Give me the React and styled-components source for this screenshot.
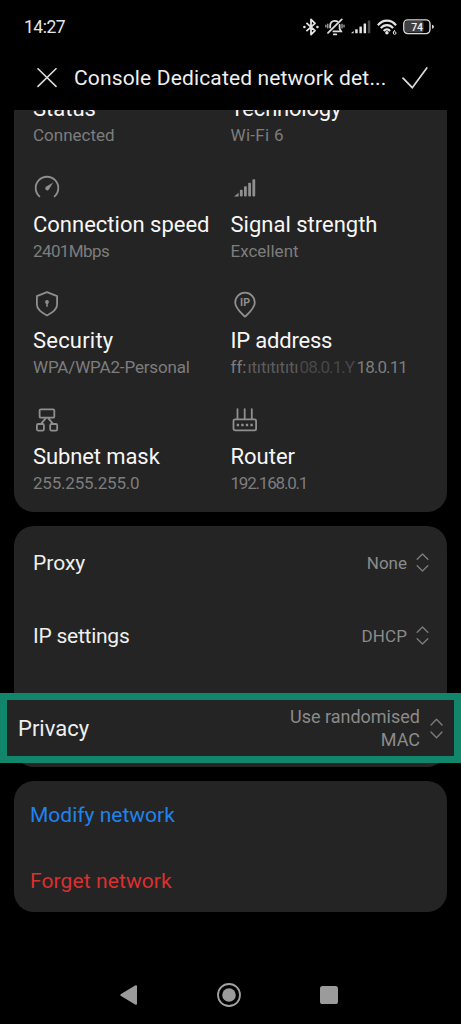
import React from "react";
import styled, { createGlobalStyle } from "styled-components";

export default function App() {
  return (
    <>
      <GlobalStyle />
      <Screen>
        <StatusBar>
          <Clock>14:27</Clock>
          <StatusIcons>
            <BluetoothIcon />
            <BellOffIcon />
            <CellIcon />
            <WifiIcon />
            <BatteryIcon />
          </StatusIcons>
        </StatusBar>
        <TitleBar>
          <svg width="20" height="20" viewBox="0 0 20 20" fill="none" stroke="#dcdcdc" strokeWidth="1.6" strokeLinecap="round">
            <path d="M1 .8 19 18.4M19 .8 1 18.4" />
          </svg>
          <Title>Console Dedicated network det...</Title>
          <svg width="26" height="22" viewBox="0 0 26 22" fill="none" stroke="#dcdcdc" strokeWidth="1.7" strokeLinecap="round">
            <path d="M1 11.2 10.3 20.7 24.8 1" />
          </svg>
        </TitleBar>
        <ScrollArea>
          <DetailsCard>
            {details.map((item) => (
              <Detail key={item.label}>
                <IconBox>{item.icon}</IconBox>
                <Label $track={item.track}>{item.label}</Label>
                <Sub $track={item.subTrack}>{item.value}</Sub>
              </Detail>
            ))}
          </DetailsCard>
          <Card>
            <Row>
              <Name>Proxy</Name>
              <Value>None</Value>
              <Chevrons />
            </Row>
            <Row>
              <Name $track="-0.25px">IP settings</Name>
              <Value $track="0.1px">DHCP</Value>
              <Chevrons />
            </Row>
            <Highlight>
              <Name $large>Privacy</Name>
              <Value $large>Use randomised MAC</Value>
              <Chevrons large />
            </Highlight>
          </Card>
          <Actions>
            <Action $color="#1f83ee">Modify network</Action>
            <Action $color="#dc2f2f" $track="0.1px">Forget network</Action>
          </Actions>
        </ScrollArea>
        <NavBar>
          <svg width="17" height="20" viewBox="0 0 17 20" fill="#9b9b9b">
            <path d="M.6 9.3 15.5.2Q17 0 17 1v18q0 1-1.5.8L.6 10.7Q0 10 .6 9.3z" />
          </svg>
          <svg width="24" height="24" viewBox="0 0 24 24">
            <circle cx="12" cy="12" r="11" fill="none" stroke="#a2a2a2" strokeWidth="1.8" />
            <circle cx="12" cy="12" r="6.8" fill="#9b9b9b" />
          </svg>
          <svg width="18" height="18" viewBox="0 0 18 18">
            <rect width="18" height="18" rx="2.6" fill="#9b9b9b" />
          </svg>
        </NavBar>
      </Screen>
    </>
  );
}

const Chevrons = ({ large }) => (
  <svg width="13" height={large ? 21 : 19} viewBox={large ? "0 0 13 21" : "0 0 13 19"} fill="none" stroke="#7b7b7b" strokeWidth="1.4" strokeLinecap="round" strokeLinejoin="round">
    {large ? (
      <path d="M1 7 6.5 1.2 12 7M1 14 6.5 19.8 12 14" />
    ) : (
      <path d="M1.2 6.2 6.5.9 11.8 6.2M1.2 12.8 6.5 18.1 11.8 12.8" />
    )}
  </svg>
);

const BluetoothIcon = () => (
  <svg width="16" height="18" viewBox="0 0 16 18" fill="none" stroke="#e4e4e4" strokeWidth="1.8" strokeLinejoin="round">
    <path d="M3.4 4.8 12 12.6 8 16.6V1.4L12 5.4 3.4 13.2" />
    <circle cx="1.4" cy="9" r="1.3" fill="#e4e4e4" stroke="none" />
    <circle cx="14.4" cy="9" r="1.3" fill="#e4e4e4" stroke="none" />
  </svg>
);

const BellOffIcon = () => (
  <svg width="20" height="18" viewBox="0 0 20 18" fill="none" stroke="#dedede" strokeWidth="1.8" strokeLinecap="round">
    <path d="M5.2 9.6V7.4C5.2 4.8 7 2.8 9.8 2.8c1 0 1.9.3 2.6.8M14.6 7v3.8l1.5 2.6H8.4" />
    <path d="M16.8 1.4 3 14.8" />
    <path d="M8.8 16.4h2.4" strokeWidth="1.9" />
    <path d="M2.8 6v4M.9 7.2v1.8M17 6v4M19 7.2v1.8" strokeWidth="1.2" stroke="#b8b8b8" />
  </svg>
);

const CellIcon = () => (
  <svg width="20" height="14" viewBox="0 0 20 14" fill="#e4e4e4">
    <path d="M0 13.2 2.6 11v2.2z" />
    <rect x="4.2" y="9.2" width="2.5" height="4" rx=".5" />
    <rect x="8.4" y="6.4" width="2.5" height="6.8" rx=".5" />
    <rect x="12.6" y="3.4" width="2.5" height="9.8" rx=".5" />
    <rect x="16.8" y=".6" width="2.5" height="12.6" rx=".5" fill="#4d4d4d" />
  </svg>
);

const WifiIcon = () => (
  <svg width="20" height="17" viewBox="0 0 20.6 17" fill="none" stroke="#e4e4e4" strokeWidth="2.2">
    <path d="M.9 6.2C6-.2 14.5-.2 19.6 6.2M3.9 9.2c3.5-4.2 9.2-4.2 12.7 0M6.9 12.1c2-2.3 4.7-2.3 6.6 0" />
    <circle cx="10.2" cy="14" r="1.8" fill="#e4e4e4" stroke="none" />
    <path d="M18.6 11.2c-1.3.6-1.8 1.6-1.8 2.7" strokeWidth="1" />
    <circle cx="18.2" cy="14.2" r="1.4" strokeWidth="1" />
  </svg>
);

const BatteryIcon = () => (
  <svg width="32" height="16" viewBox="0 0 32 16">
    <rect x="2" y="2" width="18.6" height="11.6" rx="2.6" fill="#414141" />
    <rect x=".8" y=".9" width="26.2" height="13.7" rx="4" fill="none" stroke="#dadada" strokeWidth="1.4" />
    <path d="M29 5.8q2 .4 2 2t-2 2z" fill="#dadada" />
    <text x="13.9" y="11.5" textAnchor="middle" fontFamily="Roboto, sans-serif" fontSize="10.5" fontWeight="500" fill="#f2f2f2" letterSpacing="-0.3">74</text>
  </svg>
);

const line = { fill: "none", stroke: "#8f8f8f", strokeWidth: 1.8, strokeLinecap: "round", strokeLinejoin: "round" };

const SpeedIcon = () => (
  <svg width="28" height="25" viewBox="0 0 28 25" {...line}>
    <path d="M6.4 21.4A11.3 11.3 0 1 1 21.6 21.4" />
    <path d="M20.2 7.5 15.7 14.8A2 2 0 1 1 12.9 11.8z" fill="#8f8f8f" stroke="none" />
  </svg>
);

const SignalIcon = () => (
  <svg width="28" height="25" viewBox="0 0 28 25" fill="#8f8f8f">
    <path d="M3 21.4 7.6 17.8v3.6z" />
    <rect x="8.9" y="14.8" width="2.8" height="6.6" rx=".8" />
    <rect x="13" y="11.2" width="2.8" height="10.2" rx=".8" />
    <rect x="17.2" y="7.8" width="2.8" height="13.6" rx=".8" />
    <rect x="21.4" y="4.2" width="2.8" height="17.2" rx=".8" />
  </svg>
);

const ShieldIcon = () => (
  <svg width="28" height="26" viewBox="0 0 28 26" {...line}>
    <path d="M14 1.2 24.1 5.1V13.5c0 4.2-3.8 7.7-10.1 11C7.7 21.2 3.9 17.7 3.9 13.5V5.1z" />
    <circle cx="14" cy="11" r="1.9" fill="#8f8f8f" stroke="none" />
    <path d="M14 11.3v4" strokeWidth="1.5" />
  </svg>
);

const PinIcon = () => (
  <svg width="28" height="27" viewBox="0 0 28 27" {...line}>
    <path d="M14 25.7C10 21.7 4.2 17.3 4.2 11.5a9.8 9.8 0 0 1 19.6 0C23.8 17.3 18 21.7 14 25.7z" />
    <text x="14" y="15" textAnchor="middle" fontFamily="Roboto, sans-serif" fontSize="10.5" fontWeight="700" fill="#8f8f8f" stroke="none">IP</text>
  </svg>
);

const SubnetIcon = () => (
  <svg width="28" height="25" viewBox="0 0 28 25" {...line}>
    <rect x="6.6" y="2.3" width="14.7" height="8.4" rx="1.3" />
    <rect x="3.9" y="17" width="7" height="6.6" rx="1.4" />
    <rect x="17.2" y="17" width="7" height="6.6" rx="1.4" />
    <path d="M12.6 11.4 8.2 16.6M15.4 11.4 19.8 16.6" />
  </svg>
);

const RouterIcon = () => (
  <svg width="28" height="25" viewBox="0 0 28 25" {...line}>
    <rect x="2.5" y="12.4" width="22.6" height="11" rx="1.6" />
    <path d="M6.5 2.2v10M13.7 2.2v10M20.8 2.2v10" />
    <path d="M5.7 18h2.4M10.2 18h2.4M14.8 18h2.4M19.4 18h2.4" strokeWidth="2.4" strokeLinecap="butt" />
  </svg>
);

const GlobalStyle = createGlobalStyle`
  body {
    margin: 0;
    background-color: #000;
    font-family: Roboto, "Noto Sans", sans-serif;
  }
  svg {
    display: block;
    flex-shrink: 0;
  }
`;

const Screen = styled.div`
  display: flex;
  flex-direction: column;
  width: 461px;
  height: 1024px;
  overflow: hidden;
  background: #000;
`;

const StatusBar = styled.header`
  display: flex;
  align-items: center;
  justify-content: space-between;
  height: 54px;
  padding: 0 26px 0 24px;
`;

const Clock = styled.span`
  font-size: 17.5px;
  letter-spacing: -0.5px;
  color: #e6e6e6;
`;

const StatusIcons = styled.div`
  display: flex;
  align-items: center;
  gap: 6px;
`;

const TitleBar = styled.div`
  display: flex;
  align-items: center;
  height: 48px;
  padding: 0 33px 8px 37px;
`;

const Title = styled.h1`
  flex: 1;
  margin: 0 0 0 17px;
  font-size: 21px;
  font-weight: 400;
  letter-spacing: 0.15px;
  line-height: 28px;
  white-space: nowrap;
  color: #efefef;
`;

const ScrollArea = styled.main`
  flex: 1;
  overflow: hidden;
  padding: 0 14px;
`;

const Card = styled.section`
  margin-bottom: 14px;
  padding-bottom: 4px;
  border-radius: 20px;
  background: #242424;
`;

/* scrolled up so the first row sits partly under the title bar */
const DetailsCard = styled(Card)`
  display: grid;
  grid-template-columns: 197.5px 1fr;
  row-gap: 28px;
  margin-top: -71px;
  padding: 20px 0 17px 19px;
`;

const Detail = styled.div`
  display: flex;
  flex-direction: column;
  height: 88px;
`;

const IconBox = styled.div`
  flex-shrink: 0;
  height: 24px;
  margin-bottom: 12px;
`;

const Label = styled.div`
  font-size: 22px;
  line-height: 28px;
  letter-spacing: ${(p) => p.$track || "0"};
  white-space: nowrap;
  color: #f6f6f6;
`;

const Sub = styled.div`
  display: flex;
  font-size: 17px;
  line-height: 24px;
  letter-spacing: ${(p) => p.$track || "0"};
  white-space: nowrap;
  color: #7d7d7d;
`;

const Smudge = styled.span`
  width: ${(p) => p.$width};
  letter-spacing: ${(p) => p.$track};
  color: ${(p) => p.$color};
`;

const Row = styled.div`
  display: flex;
  align-items: center;
  height: 73px;
  padding: 0 18px 0 19px;
`;

const Name = styled.span`
  flex: 1;
  font-size: ${(p) => (p.$large ? "22px" : "21px")};
  letter-spacing: ${(p) => p.$track || "0"};
  color: #efefef;
`;

const Value = styled.span`
  max-width: 140px;
  margin-right: ${(p) => (p.$large ? "10px" : "9px")};
  padding-top: ${(p) => (p.$large ? "0" : "1px")};
  font-size: ${(p) => (p.$large ? "18px" : "17px")};
  line-height: 23px;
  letter-spacing: ${(p) => p.$track || "0"};
  text-align: right;
  color: #8b8b8b;
`;

const Highlight = styled.div`
  display: flex;
  align-items: center;
  height: 56px;
  margin: 21px -14px 0;
  padding: 0 11px;
  border: 7px solid #12866b;
  background: #242424;
`;

const Actions = styled(Card)`
  display: flex;
  flex-direction: column;
  height: 131px;
  margin: 0;
  padding: 0 0 0 16px;
  box-sizing: border-box;
`;

const Action = styled.span`
  height: 65.5px;
  font-size: 21px;
  line-height: 68px;
  letter-spacing: ${(p) => p.$track || "0"};
  color: ${(p) => p.$color};
`;

const NavBar = styled.nav`
  display: flex;
  align-items: center;
  justify-content: space-between;
  height: 58px;
  padding: 0 123px 0 120px;
`;

const details = [
  { label: "Status", value: "Connected" },
  { label: "Technology", value: "Wi-Fi 6", track: "-0.2px", subTrack: "0.3px" },
  { label: "Connection speed", value: "2401Mbps", icon: <SpeedIcon />, subTrack: "-0.6px" },
  { label: "Signal strength", value: "Excellent", icon: <SignalIcon /> },
  { label: "Security", value: "WPA/WPA2-Personal", icon: <ShieldIcon />, track: "0.2px", subTrack: "-0.15px" },
  {
    label: "IP address",
    value: (
      <>
        <Smudge $width="17px" $track="0">ff:</Smudge>
        <Smudge $width="52px" $track="-0.2px" $color="#5c5c5c">
          ıtıtıtıtıtı
        </Smudge>
        <Smudge $width="57px" $track="-0.9px" $color="#484848">
          08.0.1.Y
        </Smudge>
        <span>18.0.11</span>
      </>
    ),
    icon: <PinIcon />,
    track: "-0.2px",
    subTrack: "-0.9px",
  },
  { label: "Subnet mask", value: "255.255.255.0", icon: <SubnetIcon />, track: "-0.1px", subTrack: "-0.2px" },
  { label: "Router", value: "192.168.0.1", icon: <RouterIcon />, subTrack: "-1.2px" },
];
